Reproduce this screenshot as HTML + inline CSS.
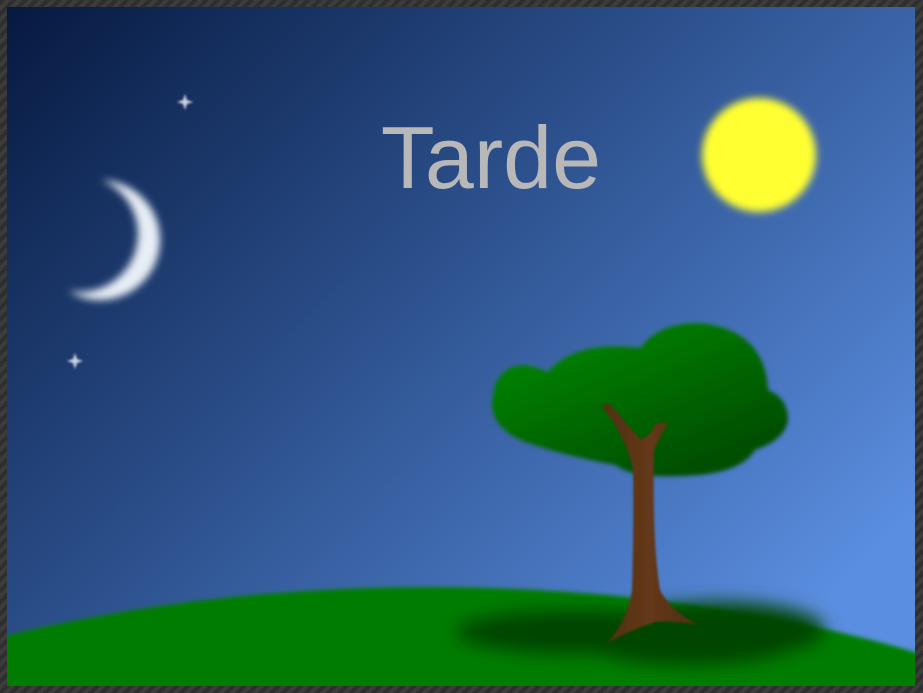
<!DOCTYPE html>
<html><head><style>
html,body{margin:0;padding:0;width:923px;height:693px;overflow:hidden;background:#3a3a3a;}
svg{display:block;position:absolute;left:0;top:0}
</style></head><body>
<svg width="923" height="693" viewBox="0 0 923 693" xmlns="http://www.w3.org/2000/svg">
<defs>
<pattern id="st" width="8" height="8" patternUnits="userSpaceOnUse" patternTransform="rotate(45)">
<rect width="8" height="8" fill="#3c3c3c"/><rect width="4" height="8" fill="#2e2e2e"/>
</pattern>
<linearGradient id="sky" x1="0" y1="0" x2="1" y2="0.75">
<stop offset="0" stop-color="#061940"/>
<stop offset="0.45" stop-color="#2a4d88"/>
<stop offset="1" stop-color="#5a8ee0"/>
</linearGradient>
<linearGradient id="leaf" gradientUnits="userSpaceOnUse" x1="600" y1="330" x2="660" y2="475">
<stop offset="0" stop-color="#008000"/>
<stop offset="1" stop-color="#005000"/>
</linearGradient>
<linearGradient id="trunk" x1="0" y1="0" x2="1" y2="0">
<stop offset="0" stop-color="#4e2e14"/>
<stop offset="0.5" stop-color="#64381a"/>
<stop offset="1" stop-color="#4e2e14"/>
</linearGradient>
<filter id="b2" x="-20%" y="-20%" width="140%" height="140%"><feGaussianBlur stdDeviation="2"/></filter>
<filter id="b4" x="-20%" y="-20%" width="140%" height="140%"><feGaussianBlur stdDeviation="4"/></filter>
<filter id="b8" x="-50%" y="-100%" width="200%" height="300%"><feGaussianBlur stdDeviation="9"/></filter>
<filter id="b1"><feGaussianBlur stdDeviation="1"/></filter>
<mask id="moon"><rect width="923" height="693" fill="black"/><circle cx="100" cy="240" r="60" fill="white"/><circle cx="80" cy="234" r="58" fill="black"/></mask>
<clipPath id="cv"><rect x="7" y="7" width="908" height="679"/></clipPath>
</defs>
<rect width="923" height="693" fill="url(#st)"/>
<g clip-path="url(#cv)">
<rect x="7" y="7" width="908" height="679" fill="url(#sky)"/>
<g filter="url(#b4)"><rect width="923" height="693" fill="#e8eef5" mask="url(#moon)"/></g>
<circle cx="759" cy="155" r="57" fill="#ffff30" filter="url(#b4)"/>
<g fill="#c8d0e0" filter="url(#b1)">
<path d="M185 94 L187 100 L193 102 L187 104 L185 110 L183 104 L177 102 L183 100Z"/>
<path d="M75 353 L77 359 L83 361 L77 363 L75 369 L73 363 L67 361 L73 359Z"/>
</g>
<text x="491" y="188" text-anchor="middle" font-family="Liberation Sans, sans-serif" font-size="88" fill="#b8b8b8">Tarde</text>
<ellipse cx="430" cy="1000" rx="900" ry="413" fill="#007d00" filter="url(#b2)"/>
<g fill="#004400" filter="url(#b8)">
<ellipse cx="580" cy="632" rx="125" ry="22"/>
<ellipse cx="720" cy="630" rx="105" ry="28"/>
<ellipse cx="690" cy="645" rx="100" ry="20"/>
</g>
<g filter="url(#b2)">
<path fill="url(#leaf)" d="M495 385 Q505 362 530 366 Q545 370 548 372 Q575 340 640 348 Q660 322 700 323 Q765 330 768 390 Q788 398 788 420 Q785 440 755 450 Q740 475 680 476 Q630 478 616 465 Q560 455 520 440 Q490 425 492 400 Z"/>
</g>
<path d="M601 405 L610 404 Q630 428 640 439 Q650 438 656 423 L668 423 Q658 440 654 450 Q652 540 660 590 Q670 610 698 625 Q670 620 655 622 Q630 630 607 643 Q628 620 632 590 Q634 520 633 470 Q628 440 601 405Z" fill="url(#trunk)" filter="url(#b1)"/>
</g>
</svg>
</body></html>
